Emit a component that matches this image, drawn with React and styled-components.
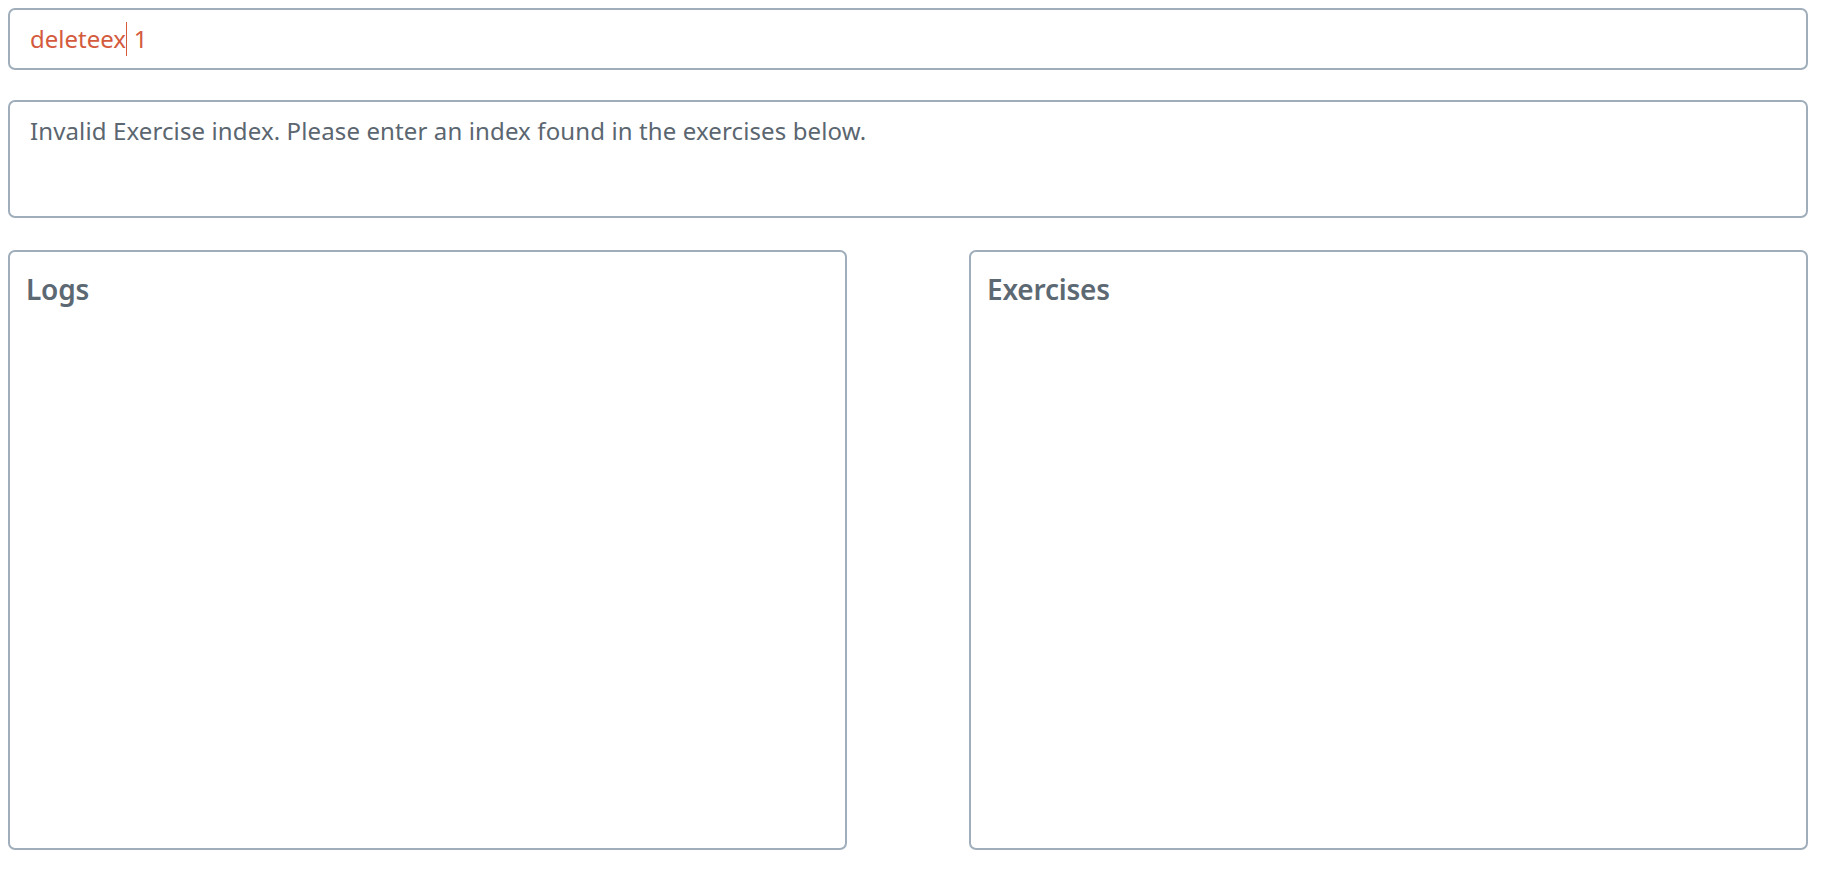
import React from "react";
import styled, { createGlobalStyle } from "styled-components";

const Global = createGlobalStyle`
  html, body { margin: 0; padding: 0; background: #ffffff; }
  body { font-family: "Noto Sans", "Open Sans", sans-serif; }
`;

const Page = styled.div`
  width: 1800px;
  padding: 8px 16px 24px 8px;
  display: flex;
  flex-direction: column;
  gap: 30px;
`;

const Frame = styled.div`
  box-sizing: border-box;
  border: 2.5px solid #a0aebc;
  border-radius: 7px;
  background: #fff;
`;

const CommandBox = styled(Frame)`
  height: 62px;
  display: flex;
  align-items: center;
  padding: 0 20px;
`;

const CommandText = styled.div`
  font-size: 24px;
  line-height: 32px;
  color: #d45a3e;
  white-space: pre;
`;

const Caret = styled.span`
  display: inline-block;
  width: 1.5px;
  height: 34px;
  vertical-align: -8px;
  background: #d45a3e;
`;

const ResultBox = styled(Frame)`
  height: 118px;
  padding: 12px 20px;
  font-size: 24px;
  letter-spacing: 0.12px;
  color: #5b6670;
  line-height: 1.4;
`;

const Panels = styled.div`
  display: flex;
  justify-content: space-between;
  margin-top: 2px;
`;

const Panel = styled(Frame)`
  width: 839px;
  height: 600px;
  padding: 19px 16px;
`;

const PanelTitle = styled.h2`
  margin: 0;
  font-size: 28px;
  font-weight: 600;
  letter-spacing: -0.2px;
  color: #5c6973;
  line-height: 1.3;
`;

export default function App() {
  return (
    <>
      <Global />
      <Page>
        <CommandBox>
          <CommandText>
            deleteex<Caret />{" 1"}
          </CommandText>
        </CommandBox>
        <ResultBox>
          Invalid Exercise index. Please enter an index found in the exercises below.
        </ResultBox>
        <Panels>
          <Panel>
            <PanelTitle>Logs</PanelTitle>
          </Panel>
          <Panel>
            <PanelTitle>Exercises</PanelTitle>
          </Panel>
        </Panels>
      </Page>
    </>
  );
}
